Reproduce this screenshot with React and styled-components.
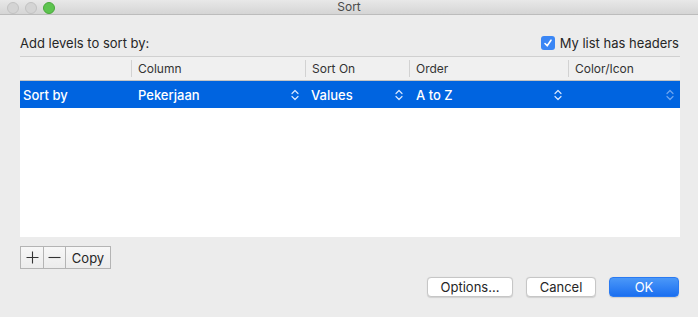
import styled, { createGlobalStyle } from 'styled-components';

const GlobalStyle = createGlobalStyle`
  html, body {
    margin: 0;
    padding: 0;
    background: #ececec;
  }
  body {
    font-family: Inter, "Liberation Sans", "Noto Sans", sans-serif;
    font-size: 13px;
    color: #262626;
  }
`;

const Window = styled.div`
  width: 698px;
  height: 317px;
  background: #ececec;
  display: flex;
  flex-direction: column;
  overflow: hidden;
`;

const TitleBar = styled.div`
  position: relative;
  height: 14px;
  border-bottom: 1px solid #bcbcbc;
  background: linear-gradient(#e8e8e8, #d5d5d5);
  display: flex;
  align-items: center;
  justify-content: center;
`;

const Lights = styled.div`
  position: absolute;
  left: 7px;
  top: 2px;
  display: flex;
  gap: 6px;
`;

const Light = styled.span`
  width: 10px;
  height: 10px;
  border-radius: 50%;
  background: ${(p) => (p.green ? '#5dc44f' : '#d4d4d4')};
  border: 0.5px solid ${(p) => (p.green ? '#4aa83c' : '#c2c2c2')};
`;

const Title = styled.div`
  font-size: 12px;
  color: #4a4a4a;
  line-height: 14px;
`;

const Body = styled.div`
  padding: 0 18px 0 20px;
  display: flex;
  flex-direction: column;
`;

const TopRow = styled.div`
  height: 36px;
  padding-bottom: 5px;
  display: flex;
  align-items: flex-end;
  justify-content: space-between;
`;

const CheckLabel = styled.label`
  display: flex;
  align-items: center;
  gap: 5px;
  margin-right: 1px;
`;

const Check = styled.span`
  width: 14px;
  height: 14px;
  border-radius: 3px;
  background: #3a86f5;
  display: flex;
  align-items: center;
  justify-content: center;
`;

const Table = styled.div`
  border-top: 1px solid #d0d0d0;
  display: flex;
  flex-direction: column;
`;

const Grid = styled.div`
  display: grid;
  grid-template-columns: 111px 174px 104px 159px 112px;
`;

const HeaderRow = styled(Grid)`
  height: 23px;
  background: #f0f0f0;
  border-bottom: 1px solid #c4c4c4;
`;

const HeaderCell = styled.div`
  display: flex;
  align-items: center;
  padding-left: 6px;
  font-size: 12px;
  color: #333;
  border-left: ${(p) => (p.first ? 'none' : '1px solid #d2d2d2')};
  margin: 3px 0;
  line-height: 17px;
`;

const RowsArea = styled.div`
  height: 156px;
  background: #fff;
`;

const SelectedRow = styled(Grid)`
  height: 27px;
  background: #0064e0;
  color: #fff;
  font-weight: 500;
`;

const Cell = styled.div`
  display: flex;
  align-items: center;
  justify-content: space-between;
  padding: 0 6px 0 ${(p) => p.pad || 7}px;
`;

const MiniBar = styled.div`
  margin-top: 9px;
  display: flex;
  align-self: flex-start;
  border: 1px solid #b4b4b4;
  height: 21px;
`;

const MiniButton = styled.button`
  width: ${(p) => p.w}px;
  height: 21px;
  padding: 0;
  border: none;
  border-left: ${(p) => (p.first ? 'none' : '1px solid #b4b4b4')};
  background: linear-gradient(#f7f7f7, #ececec);
  font-family: inherit;
  font-size: 13px;
  color: #262626;
  display: flex;
  align-items: center;
  justify-content: center;
`;

const Footer = styled.div`
  margin-top: 8px;
  display: flex;
  justify-content: flex-end;
  gap: 13px;
  padding-right: 1px;
`;

const Button = styled.button`
  width: ${(p) => p.w}px;
  height: 20px;
  padding: 0;
  border-radius: 4px;
  font-family: inherit;
  font-size: 13px;
  border: 1px solid ${(p) => (p.primary ? '#2a7af2' : '#c6c6c6')};
  background: ${(p) => (p.primary ? 'linear-gradient(#4b98f8, #1b6ff0)' : '#ffffff')};
  color: ${(p) => (p.primary ? '#fff' : '#262626')};
  box-shadow: 0 0.5px 1px rgba(0, 0, 0, 0.12);
`;

const Chevrons = ({ faint }) => (
  <svg width="8" height="12" viewBox="0 0 8 12">
    <path
      d="M1 4.5 L4 1.5 L7 4.5 M1 7.5 L4 10.5 L7 7.5"
      fill="none"
      stroke={faint ? '#6ea6f0' : '#d6e6ff'}
      strokeWidth="1.2"
      strokeLinecap="round"
      strokeLinejoin="round"
    />
  </svg>
);

const App = () => (
  <Window>
    <GlobalStyle />
    <TitleBar>
      <Lights>
        <Light />
        <Light />
        <Light green />
      </Lights>
      <Title>Sort</Title>
    </TitleBar>
    <Body>
      <TopRow>
        <span>Add levels to sort by:</span>
        <CheckLabel>
          <Check>
            <svg width="10" height="10" viewBox="0 0 10 10">
              <path d="M2 5.5 L4.2 7.8 L8 2.2" fill="none" stroke="#fff" strokeWidth="1.6" strokeLinecap="round" strokeLinejoin="round" />
            </svg>
          </Check>
          <span>My list has headers</span>
        </CheckLabel>
      </TopRow>
      <Table>
        <HeaderRow>
          <HeaderCell first />
          <HeaderCell>Column</HeaderCell>
          <HeaderCell>Sort On</HeaderCell>
          <HeaderCell>Order</HeaderCell>
          <HeaderCell>Color/Icon</HeaderCell>
        </HeaderRow>
        <RowsArea>
          <SelectedRow>
            <Cell pad={3}>Sort by</Cell>
            <Cell>
              Pekerjaan
              <Chevrons />
            </Cell>
            <Cell pad={6}>
              Values
              <Chevrons />
            </Cell>
            <Cell>
              A to Z
              <Chevrons />
            </Cell>
            <Cell>
              <span />
              <Chevrons faint />
            </Cell>
          </SelectedRow>
        </RowsArea>
      </Table>
      <MiniBar>
        <MiniButton first w={22}>
          <svg width="13" height="13" viewBox="0 0 13 13">
            <path d="M6.5 0.5 V12.5 M0.5 6.5 H12.5" stroke="#333" strokeWidth="1.1" />
          </svg>
        </MiniButton>
        <MiniButton w={22}>
          <svg width="13" height="13" viewBox="0 0 13 13">
            <path d="M0.5 6.5 H12.5" stroke="#333" strokeWidth="1.1" />
          </svg>
        </MiniButton>
        <MiniButton w={45}>Copy</MiniButton>
      </MiniBar>
      <Footer>
        <Button w={86}>Options...</Button>
        <Button w={70}>Cancel</Button>
        <Button primary w={70}>OK</Button>
      </Footer>
    </Body>
  </Window>
);

export default App;
